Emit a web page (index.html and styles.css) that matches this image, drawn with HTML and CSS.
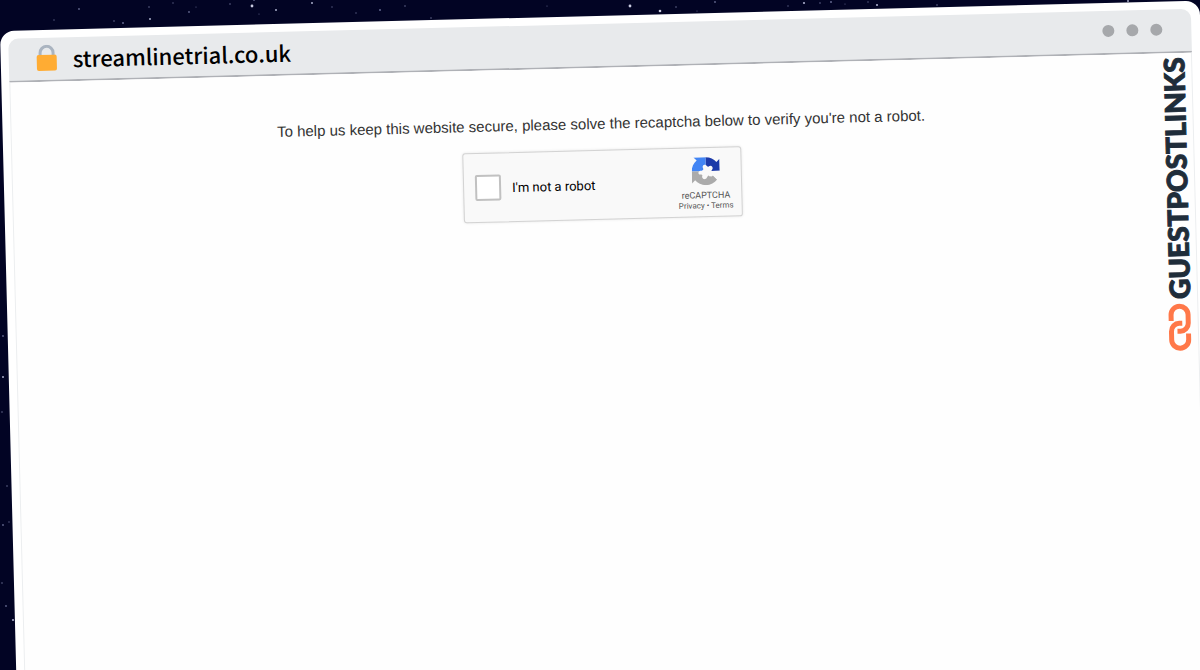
FILE: index.html
```html
<!DOCTYPE html>
<html lang="en">
<head>
    <meta charset="UTF-8">
    <meta name="viewport" content="width=device-width, initial-scale=1.0">
    <title>streamlinetrial.co.uk</title>
    <link rel="stylesheet" href="styles.css">
</head>
<body>

<!-- Night sky -->
<svg class="stars" width="1200" height="670" viewBox="0 0 1200 670" fill="#62668c" aria-hidden="true">
    <circle cx="54" cy="20" r="0.7"/>
    <circle cx="79" cy="9" r="0.9"/>
    <circle cx="114" cy="21" r="0.8"/>
    <circle cx="123" cy="23" r="1"/>
    <circle cx="149" cy="7" r="0.8"/>
    <circle cx="150" cy="19" r="1" fill="#a9acc9"/>
    <circle cx="173" cy="3" r="0.7"/>
    <circle cx="189" cy="12" r="0.9"/>
    <circle cx="196" cy="7" r="0.6"/>
    <circle cx="230" cy="4" r="0.8"/>
    <circle cx="252" cy="6" r="1.4" fill="#c9cbe0"/>
    <circle cx="254" cy="0" r="0.9"/>
    <circle cx="259" cy="14" r="0.6"/>
    <circle cx="276" cy="10" r="1" fill="#a9acc9"/>
    <circle cx="312" cy="3" r="1" fill="#a9acc9"/>
    <circle cx="332" cy="7" r="0.7"/>
    <circle cx="356" cy="13" r="0.7"/>
    <circle cx="380" cy="10" r="1"/>
    <circle cx="405" cy="6" r="0.8"/>
    <circle cx="431" cy="18" r="0.8"/>
    <circle cx="547" cy="6" r="0.6"/>
    <circle cx="630" cy="6" r="1.4" fill="#c9cbe0"/>
    <circle cx="660" cy="11" r="1.3" fill="#c9cbe0"/>
    <circle cx="676" cy="7" r="0.8"/>
    <circle cx="697" cy="11" r="0.6"/>
    <circle cx="715" cy="2" r="0.9"/>
    <circle cx="788" cy="6" r="0.7"/>
    <circle cx="804" cy="3" r="1.1" fill="#a9acc9"/>
    <circle cx="820" cy="3" r="0.8"/>
    <circle cx="831" cy="2" r="1"/>
    <circle cx="845" cy="4" r="0.6"/>
    <circle cx="868" cy="2" r="0.7"/>
    <circle cx="877" cy="5" r="1.1" fill="#a9acc9"/>
    <circle cx="937" cy="5" r="0.8"/>
    <circle cx="1128" cy="1" r="1" fill="#a9acc9"/>
    <circle cx="3" cy="336" r="0.9"/>
    <circle cx="3" cy="377" r="1" fill="#a9acc9"/>
    <circle cx="2" cy="412" r="0.8"/>
    <circle cx="7" cy="486" r="0.8"/>
    <circle cx="3" cy="525" r="0.9"/>
    <circle cx="9" cy="522" r="0.7"/>
    <circle cx="2" cy="583" r="0.8"/>
    <circle cx="6" cy="606" r="0.9"/>
    <circle cx="13" cy="620" r="1.1" fill="#a9acc9"/>
</svg>

<div class="window">
    <header class="title-bar">
        <svg class="lock" viewBox="0 0 22 27" aria-hidden="true">
            <path d="M4.500 12V8a6.500 6.500 0 0 1 13 0v4" fill="none" stroke="#aab4c0" stroke-width="3"/>
            <rect x="1" y="10" width="20" height="16" rx="2" fill="#ffac33"/>
        </svg>
        <span class="address">streamlinetrial.co.uk</span>
        <div class="dots">
            <span></span>
            <span></span>
            <span></span>
        </div>
    </header>

    <main class="page">
        <p class="message">To help us keep this website secure, please solve the recaptcha below to verify you're not a robot.</p>
        <form class="captcha">
            <input type="checkbox" id="not-robot">
            <label for="not-robot">I'm not a robot</label>
            <div class="captcha-brand">
                <svg class="captcha-logo" viewBox="0 0 64 64" aria-hidden="true">
                    <path fill="#1c3aa9" d="M64 32V4.560l-7.200 7.200C50.880 4.540 41.970 0 32 0v24l10 8z"/>
                    <path fill="#4285f4" d="M32 0H4.560l7.200 7.190C4.540 13.090 0 22 0 32h22l10-8z"/>
                    <path fill="#ababab" d="M0 32v27.400l7.190-7.200C13.090 59.430 21.990 64 31.960 64c10.380 0 19.600-4.920 25.440-12.550L45 39 34 34 22 32z"/>
                    <path fill="#f9f9f9" d="M64 32H46l3 5-4 2 12.400 12.500L64 46z"/>
                    <path fill="#f9f9f9" d="M26 25c-3-6 3-9 6-7 3 1 3 4 6 4 3-1 6-4 9 0 3 5-2 7-2 10 1 3 6 5 3 10-3 4-8 2-10 0-4 2-3 7-8 8-6 1-8-5-6-9-3-2-8 1-9-5 0-6 6-6 10-5 2-1 2-3 1-6z"/>
                </svg>
                <span class="captcha-name">reCAPTCHA</span>
                <span class="captcha-links"><a href="#">Privacy</a> • <a href="#">Terms</a></span>
            </div>
        </form>
    </main>

    <div class="watermark">
        <span class="watermark-text">GUESTPOSTLINKS</span>
        <svg class="watermark-icon" viewBox="0 0 24 48" fill="none" stroke="#ff7849" stroke-width="5" aria-hidden="true">
            <path d="M3.500 17.500V11.500a8.500 8.500 0 0 1 17 0V20a8 8 0 0 1-8 8H9.500"/>
            <path d="M20.500 30.500v6a8.500 8.500 0 0 1-17 0V28a8 8 0 0 1 8-8H14.500"/>
        </svg>
    </div>
</div>

</body>
</html>
```
FILE: styles.css
```css
* {
    margin: 0;
    padding: 0;
    box-sizing: border-box;
}
body {
    font-family: "Liberation Sans", Arial, sans-serif;
    background-color: #020424;
    color: #333;
    height: 100vh;
    padding-top: 31px;
    overflow: hidden;
}
.stars {
    position: absolute;
    top: 0;
    left: 0;
}
.window {
    position: relative;
    display: flex;
    flex-direction: column;
    min-height: 101vh;
    padding: 8px 9px 0 8px;
    background-color: #fff;
    border-radius: 14px 14px 0 0;
    transform: rotate(-1.45deg);
    transform-origin: top left;
}
.title-bar {
    display: flex;
    align-items: center;
    height: 44px;
    padding: 0 29px 2px 27px;
    background-color: #e8eaec;
    border-bottom: 2px solid #afb1b6;
    border-radius: 10px 10px 0 0;
}
.lock {
    width: 22px;
    height: 27px;
    margin-right: 15px;
}
.address {
    font-family: "Noto Sans CJK JP", sans-serif;
    font-size: 22px;
    font-weight: 500;
    line-height: 32px;
    color: #000;
}
.dots {
    display: flex;
    gap: 12px;
    margin-left: auto;
}
.dots span {
    width: 12px;
    height: 12px;
    border-radius: 50%;
    background-color: #a6a8ab;
}
.page {
    display: flex;
    flex: 1;
    flex-direction: column;
    align-items: center;
    padding: 44px 2px 0 0;
    background-color: #fefefe;
    border: 1px solid #eceef0;
    border-top: none;
}
.message {
    font-size: 15px;
    line-height: 24px;
    margin-bottom: 14px;
}
.captcha {
    display: flex;
    align-items: center;
    width: 279px;
    height: 70px;
    padding: 0 8px 0 11px;
    background-color: #f9f9f9;
    border: 1px solid #d3d3d3;
    border-radius: 3px;
    box-shadow: 0 0 3px rgba(0, 0, 0, 0.1);
    font-family: Roboto, sans-serif;
}
.captcha input {
    appearance: none;
    width: 26px;
    height: 26px;
    background-color: #fff;
    border: 2px solid #c1c1c1;
    border-radius: 2px;
}
.captcha label {
    margin-left: 11px;
    font-size: 13px;
    color: #000;
}
.captcha-brand {
    display: flex;
    flex-direction: column;
    align-items: center;
    margin-left: auto;
    padding-top: 4px;
    color: #555;
}
.captcha-logo {
    width: 28px;
    height: 28px;
    margin-bottom: 4px;
}
.captcha-name {
    font-size: 9px;
    line-height: 12px;
}
.captcha-links {
    font-size: 8px;
    line-height: 10px;
}
.captcha-links a {
    color: #555;
    text-decoration: none;
}
.watermark {
    position: absolute;
    top: 56px;
    right: 14px;
    display: flex;
    flex-direction: column;
    align-items: center;
    gap: 4px;
}
.watermark-text {
    writing-mode: vertical-rl;
    transform: rotate(180deg);
    font-family: Lato, sans-serif;
    font-size: 28px;
    font-weight: 900;
    line-height: 28px;
    color: #1f2d3a;
    -webkit-text-stroke: 1px #1f2d3a;
}
.watermark-icon {
    width: 24px;
    height: 48px;
}
```
